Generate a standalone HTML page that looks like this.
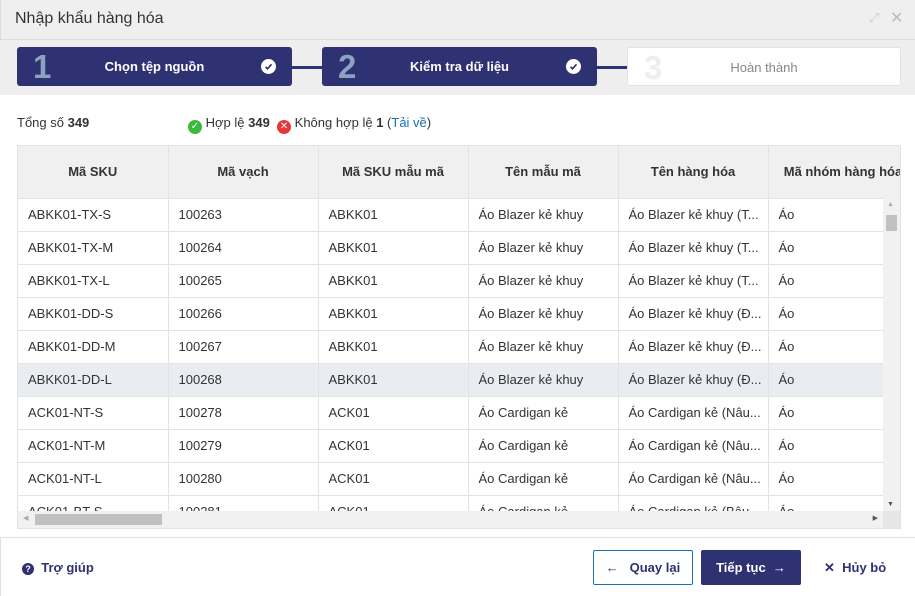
<!DOCTYPE html>
<html><head><meta charset="utf-8"><style>
*{box-sizing:border-box;margin:0;padding:0}
body{width:915px;height:596px;overflow:hidden;background:#fff;font-family:"Liberation Sans",sans-serif;font-size:13px;color:#333;position:relative}
.a{position:absolute}
.hdr{left:0;top:0;width:915px;height:40px;background:#efefef;border-bottom:1px solid #ddd;border-left:1px solid #ddd}
.steps{left:0;top:40px;width:915px;height:55px;background:#eeeeee}
.step{top:47px;height:39px;width:275px;background:#2e3172;border-radius:3px;color:#fff;font-weight:bold;font-size:13px}
.step .n{position:absolute;left:16px;top:1px;font-size:33px;font-weight:bold;color:#8aa3bf}
.step .t{position:absolute;left:0;right:0;top:12px;text-align:center}
.step .c{position:absolute;right:16px;top:12px;width:15px;height:15px;border-radius:50%;background:#fff}
.line{top:66px;height:3px;background:#2e3172}
table{border-collapse:collapse;table-layout:fixed;width:900px}
td,th{width:150px;border-right:1px solid #e3e3e3;border-bottom:1px solid #e3e3e3;text-align:left;padding:0 10px;white-space:nowrap;overflow:hidden;font-weight:normal;height:33px;font-size:13px;color:#333}
th{height:52px;text-align:center;font-weight:bold;background:#f0f0f0;color:#333}
tr.h td{background:#e9edf1}
.btn{top:550px;height:35px;border-radius:2px;font-weight:bold;font-size:13px;line-height:33px}
</style></head><body>
<div class="a hdr"><div class="a" style="left:14px;top:10px;font-size:16px;color:#333">Nhập khẩu hàng hóa</div>
<div class="a" style="left:868px;top:10px;color:#ccc;font-size:13px">⤢</div>
<div class="a" style="left:889px;top:8px;color:#bbb;font-size:16px">✕</div></div>
<div class="a steps"></div>
<div class="a line" style="left:291px;width:31px"></div>
<div class="a line" style="left:596px;width:31px"></div>
<div class="a step" style="left:17px"><span class="n">1</span><span class="t">Chọn tệp nguồn</span><span class="c"><svg width="15" height="15"><path d="M4.5 7.8l2 2 4-4.5" stroke="#2e3172" stroke-width="1.6" fill="none"/></svg></span></div>
<div class="a step" style="left:322px"><span class="n">2</span><span class="t">Kiểm tra dữ liệu</span><span class="c"><svg width="15" height="15"><path d="M4.5 7.8l2 2 4-4.5" stroke="#2e3172" stroke-width="1.6" fill="none"/></svg></span></div>
<div class="a step" style="left:627px;background:#fff;border:1px solid #e3e3e3;width:274px"><span class="n" style="color:#eee">3</span><span class="t" style="font-weight:normal;color:#888">Hoàn thành</span></div>
<div class="a" style="left:17px;top:115px">Tổng số <b>349</b></div>
<div class="a" style="left:188px;top:115px"><span style="display:inline-block;width:14px;height:14px;border-radius:50%;background:#3cb83c;color:#fff;font-size:10px;text-align:center;line-height:14px;vertical-align:-2px">✓</span> Hợp lệ <b>349</b>&nbsp; <span style="display:inline-block;width:14px;height:14px;border-radius:50%;background:#e5383b;color:#fff;font-size:10px;text-align:center;line-height:14px;vertical-align:-2px">✕</span> Không hợp lệ <b>1</b> (<span style="color:#1a6fb5">Tải về</span>)</div>
<div class="a" style="left:17px;top:145px;width:884px;height:384px;border:1px solid #e3e3e3;overflow:hidden">
<table><colgroup><col style="width:150px"><col style="width:150px"><col style="width:150px"><col style="width:150px"><col style="width:150px"><col style="width:150px"></colgroup>
<tr><th>Mã SKU</th><th>Mã vạch</th><th>Mã SKU mẫu mã</th><th>Tên mẫu mã</th><th>Tên hàng hóa</th><th>Mã nhóm hàng hóa</th></tr>
<tr><td>ABKK01-TX-S</td><td>100263</td><td>ABKK01</td><td>Áo Blazer kẻ khuy</td><td>Áo Blazer kẻ khuy (T...</td><td>Áo</td></tr>
<tr><td>ABKK01-TX-M</td><td>100264</td><td>ABKK01</td><td>Áo Blazer kẻ khuy</td><td>Áo Blazer kẻ khuy (T...</td><td>Áo</td></tr>
<tr><td>ABKK01-TX-L</td><td>100265</td><td>ABKK01</td><td>Áo Blazer kẻ khuy</td><td>Áo Blazer kẻ khuy (T...</td><td>Áo</td></tr>
<tr><td>ABKK01-DD-S</td><td>100266</td><td>ABKK01</td><td>Áo Blazer kẻ khuy</td><td>Áo Blazer kẻ khuy (Đ...</td><td>Áo</td></tr>
<tr><td>ABKK01-DD-M</td><td>100267</td><td>ABKK01</td><td>Áo Blazer kẻ khuy</td><td>Áo Blazer kẻ khuy (Đ...</td><td>Áo</td></tr>
<tr class="h"><td>ABKK01-DD-L</td><td>100268</td><td>ABKK01</td><td>Áo Blazer kẻ khuy</td><td>Áo Blazer kẻ khuy (Đ...</td><td>Áo</td></tr>
<tr><td>ACK01-NT-S</td><td>100278</td><td>ACK01</td><td>Áo Cardigan kẻ</td><td>Áo Cardigan kẻ (Nâu...</td><td>Áo</td></tr>
<tr><td>ACK01-NT-M</td><td>100279</td><td>ACK01</td><td>Áo Cardigan kẻ</td><td>Áo Cardigan kẻ (Nâu...</td><td>Áo</td></tr>
<tr><td>ACK01-NT-L</td><td>100280</td><td>ACK01</td><td>Áo Cardigan kẻ</td><td>Áo Cardigan kẻ (Nâu...</td><td>Áo</td></tr>
<tr><td>ACK01-BT-S</td><td>100281</td><td>ACK01</td><td>Áo Cardigan kẻ</td><td>Áo Cardigan kẻ (Bâu...</td><td>Áo</td></tr>
</table>
<div class="a" style="left:865px;top:52px;width:17px;height:313px;background:#f1f1f1"><div class="a" style="left:3px;top:17px;width:11px;height:16px;background:#c1c1c1"></div><div class="a" style="left:4px;top:3px;font-size:7px;color:#aaa">▲</div><div class="a" style="left:4px;bottom:3px;font-size:7px;color:#555">▼</div></div>
<div class="a" style="left:0;top:365px;width:865px;height:17px;background:#f1f1f1"><div class="a" style="left:17px;top:3px;width:127px;height:11px;background:#c1c1c1"></div><div class="a" style="left:5px;top:3px;font-size:7px;color:#aaa">◀</div><div class="a" style="right:5px;top:3px;font-size:7px;color:#555">▶</div></div>
<div class="a" style="left:865px;top:365px;width:17px;height:17px;background:#e6e6e6"></div>
</div>
<div class="a" style="left:0;top:537px;width:915px;height:1px;background:#e0e0e0"></div>
<div class="a" style="left:0;top:537px;width:1px;height:59px;background:#e0e0e0"></div>
<div class="a" style="left:22px;top:560px;font-weight:bold;color:#2e3172"><span style="display:inline-block;width:12px;height:12px;border-radius:50%;background:#2e3172;color:#fff;font-size:9px;text-align:center;line-height:12px;vertical-align:0">?</span>&nbsp; Trợ giúp</div>
<div class="a btn" style="left:593px;width:100px;border:1px solid #1a6fb5;color:#2e3172;text-align:center">←&nbsp;&nbsp; Quay lại</div>
<div class="a btn" style="left:701px;width:100px;background:#2e3172;color:#fff;text-align:center;line-height:35px">Tiếp tục &nbsp;→</div>
<div class="a btn" style="left:824px;width:70px;color:#2e3172;line-height:35px">✕&nbsp; Hủy bỏ</div>
</body></html>
